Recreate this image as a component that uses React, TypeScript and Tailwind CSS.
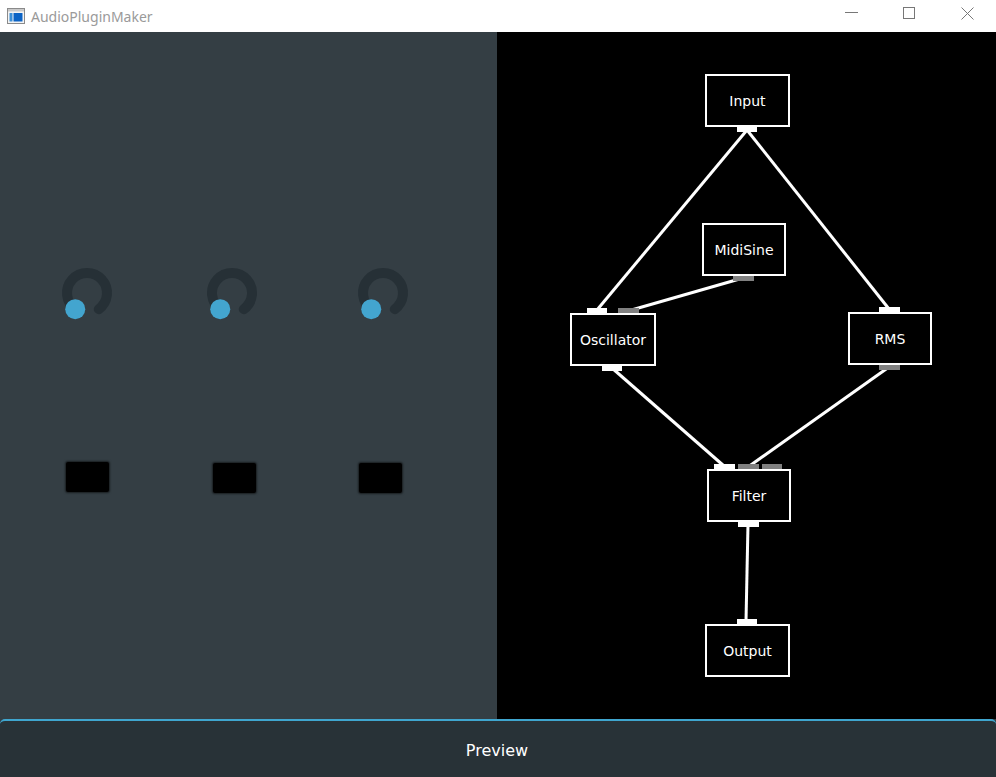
import React from "react";

type Port = { x: number; y: number; w: number; grey?: boolean };
type Node = { label: string; x: number; y: number; w: number; h: number };

const OX = 497;
const OY = 32;

const nodes: Node[] = [
  { label: "Input", x: 705, y: 74, w: 85, h: 53 },
  { label: "MidiSine", x: 702, y: 223, w: 84, h: 53 },
  { label: "Oscillator", x: 570, y: 313, w: 86, h: 53 },
  { label: "RMS", x: 848, y: 312, w: 84, h: 53 },
  { label: "Filter", x: 707, y: 469, w: 84, h: 53 },
  { label: "Output", x: 705, y: 624, w: 85, h: 53 },
];

const ports: Port[] = [
  { x: 737, y: 127, w: 20 },
  { x: 733, y: 276, w: 21, grey: true },
  { x: 587, y: 308, w: 20 },
  { x: 618, y: 308, w: 21, grey: true },
  { x: 602, y: 366, w: 20 },
  { x: 879, y: 307, w: 21 },
  { x: 879, y: 365, w: 21, grey: true },
  { x: 714, y: 464, w: 21 },
  { x: 738, y: 464, w: 21, grey: true },
  { x: 762, y: 464, w: 20, grey: true },
  { x: 738, y: 522, w: 21 },
  { x: 737, y: 619, w: 20 },
];

const lines: [number, number, number, number][] = [
  [747, 130, 597, 310],
  [747, 130, 889, 309],
  [743, 278, 628, 311],
  [612, 368, 724, 466],
  [889, 367, 748, 467],
  [748, 524, 746, 621],
];

function Knob({ className }: { className: string }) {
  return (
    <svg width="60" height="60" viewBox="0 0 60 60" className={className}>
      <path
        d="M 18.24 46.18 A 20 20 0 1 1 41.76 46.18"
        fill="none"
        stroke="#263036"
        strokeWidth="10"
        strokeLinecap="round"
      />
      <circle cx="18.24" cy="46.18" r="10" fill="#43a5cf" />
    </svg>
  );
}

export default function App() {
  return (
    <div className="w-[996px] h-[777px] flex flex-col overflow-hidden bg-[#343e44]">
      {/* Title bar */}
      <div className="h-8 bg-white flex items-center shrink-0">
        <svg width="18" height="16" viewBox="0 0 18 16" className="ml-[7px]">
          <rect x="0.5" y="0.5" width="17" height="15" fill="#f4f4f4" stroke="#8a8a8a" />
          <rect x="1" y="1" width="16" height="2.5" fill="#c9c9c9" />
          <rect x="2.5" y="5" width="3" height="8.5" fill="#3b8fd8" />
          <rect x="6.5" y="5" width="9" height="8.5" fill="#0b63c5" />
        </svg>
        <span
          className="ml-[6px] text-[14px] text-[#9a9a9a]"
          style={{ fontFamily: '"Noto Sans", "Open Sans", sans-serif' }}
        >
          AudioPluginMaker
        </span>
        <div className="ml-auto flex items-center h-full">
          <svg width="58" height="32" viewBox="0 0 58 32">
            <line x1="23" y1="12.5" x2="36" y2="12.5" stroke="#777" strokeWidth="1" />
          </svg>
          <svg width="58" height="32" viewBox="0 0 58 32">
            <rect x="23.5" y="7.5" width="11" height="11" fill="none" stroke="#777" strokeWidth="1" />
          </svg>
          <svg width="58" height="32" viewBox="0 0 58 32">
            <path d="M23.5 7.5 L35.5 19.5 M35.5 7.5 L23.5 19.5" stroke="#777" strokeWidth="1" />
          </svg>
        </div>
      </div>

      {/* Main */}
      <div className="flex h-[687px] shrink-0">
        <div className="w-[497px] bg-[#343e44] flex flex-col">
          <div className="flex mt-[231px]">
            <Knob className="ml-[57px]" />
            <Knob className="ml-[85px]" />
            <Knob className="ml-[91px]" />
          </div>
          <div className="flex items-start mt-[139px]">
            <div className="ml-[66px] w-[43px] h-[30px] bg-black rounded-[2px] shadow-[0_0_2px_1px_rgba(0,0,0,0.55)]" />
            <div className="ml-[104px] mt-px w-[43px] h-[30px] bg-black rounded-[2px] shadow-[0_0_2px_1px_rgba(0,0,0,0.55)]" />
            <div className="ml-[103px] mt-px w-[43px] h-[30px] bg-black rounded-[2px] shadow-[0_0_2px_1px_rgba(0,0,0,0.55)]" />
          </div>
        </div>
        <div className="flex-1 bg-black relative">
          <svg className="absolute inset-0" width="499" height="687">
            {lines.map(([x1, y1, x2, y2], i) => (
              <line
                key={i}
                x1={x1 - OX}
                y1={y1 - OY}
                x2={x2 - OX}
                y2={y2 - OY}
                stroke="#ffffff"
                strokeWidth="3"
              />
            ))}
          </svg>
          {nodes.map((n) => (
            <div
              key={n.label}
              className="absolute bg-black border-2 border-white flex items-center justify-center pt-[2px] text-white text-[14px]"
              style={{
                left: n.x - OX,
                top: n.y - OY,
                width: n.w,
                height: n.h,
                fontFamily: '"DejaVu Sans", Verdana, sans-serif',
              }}
            >
              {n.label}
            </div>
          ))}
          {ports.map((p, i) => (
            <div
              key={i}
              className={p.grey ? "absolute h-[5px] bg-[#808080]" : "absolute h-[5px] bg-white"}
              style={{ left: p.x - OX, top: p.y - OY, width: p.w }}
            />
          ))}
        </div>
      </div>

      {/* Bottom bar */}
      <div className="h-[58px] shrink-0 bg-[#283237] border-t-2 border-[#3fa6cf] rounded-t-[5px] flex items-center justify-center">
        <span
          className="text-white text-[16px] mt-[4px] -ml-[2px]"
          style={{ fontFamily: '"DejaVu Sans", Verdana, sans-serif' }}
        >
          Preview
        </span>
      </div>
    </div>
  );
}
